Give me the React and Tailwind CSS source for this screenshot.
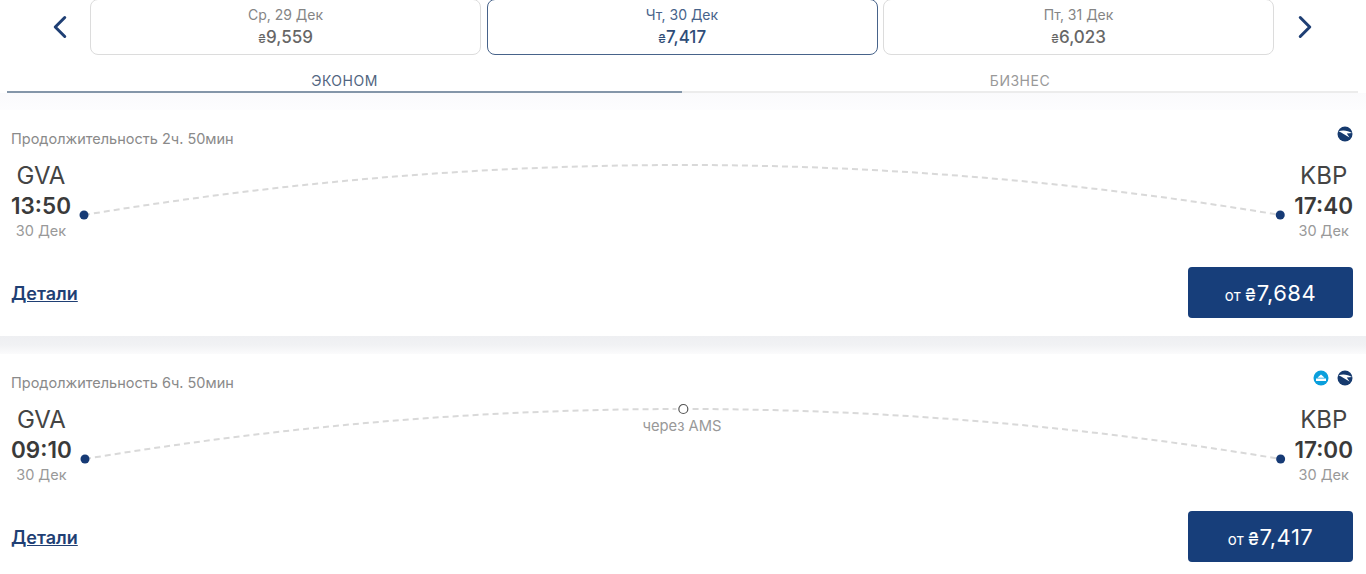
import { ChevronLeft, ChevronRight } from 'lucide-react'

const dates = [
  { day: 'Ср, 29 Дек', price: '9,559' },
  { day: 'Чт, 30 Дек', price: '7,417', active: true },
  { day: 'Пт, 31 Дек', price: '6,023' },
]

const flights = [
  { duration: 'Продолжительность 2ч. 50мин', dep: '13:50', arr: '17:40', price: '7,684', logos: ['wing'] },
  { duration: 'Продолжительность 6ч. 50мин', dep: '09:10', arr: '17:00', price: '7,417', logos: ['klm', 'wing'], via: 'через AMS' },
]

function WingLogo() {
  return (
    <svg width="16" height="16" viewBox="0 0 16 16">
      <circle cx="8" cy="8" r="7.5" fill="#163a6e" />
      <path d="M1.5 5.2C6 3.8 11 4.4 15 7L9.8 7.6L12.5 11.5L7 8.2C5 7 3.2 6 1.5 5.2Z" fill="#fff" />
    </svg>
  )
}

function KlmLogo() {
  return (
    <svg width="16" height="16" viewBox="0 0 16 16">
      <circle cx="8" cy="8" r="7.5" fill="#0a9fdc" />
      <path d="M3 8.5H13V11H3Z M4.5 7.8L6 6.2L8 4.6L10 6.2L11.5 7.8Z" fill="#fff" />
    </svg>
  )
}

function Curve({ via }) {
  const width = 1222
  const right = width - 14
  return (
    <svg className="flex-1 h-[70px] self-start overflow-visible" viewBox={`0 0 ${width} 70`} preserveAspectRatio="none">
      <path
        d={`M13 54Q${width / 2} -46 ${right} 54`}
        fill="none"
        stroke="#d9d9d9"
        strokeWidth="2"
        strokeDasharray="6 4"
      />
      {via && <circle cx={width / 2} cy="4" r="7" fill="#fff" />}
      {via && <circle cx={width / 2} cy="4" r="4.5" fill="#fff" stroke="#555" strokeWidth="1.2" />}
      <circle cx="13" cy="54" r="4.5" fill="#163a75" />
      <circle cx={right} cy="54" r="4.5" fill="#163a75" />
    </svg>
  )
}

function Airport({ code, time }) {
  return (
    <div className="flex flex-col items-center shrink-0">
      <div className="text-[24px] leading-[30px] text-[#444]">{code}</div>
      <div className="text-[22.5px] leading-[30px] font-semibold text-[#3a3a3a]">{time}</div>
      <div className="text-[14.5px] leading-[20px] text-[#999]">30 Дек</div>
    </div>
  )
}

function FlightCard({ flight }) {
  return (
    <div className="relative bg-white h-[226px] pl-[11px] pr-[13px] pt-[18px]">
      <div className="flex items-center justify-between h-[22px]">
        <div className="text-[14.5px] text-[#8a8a8a]">{flight.duration}</div>
        <div className="flex items-center gap-[8px] mb-[10px]">
          {flight.logos.map((logo) => (logo === 'klm' ? <KlmLogo key={logo} /> : <WingLogo key={logo} />))}
        </div>
      </div>
      <div className="relative flex mt-[11px]">
        <Airport code="GVA" time={flight.dep} />
        <Curve via={flight.via} />
        <Airport code="KBP" time={flight.arr} />
        {flight.via && (
          <div className="absolute left-0 right-0 top-[10px] text-center text-[14.75px] text-[#999]">{flight.via}</div>
        )}
      </div>
      <div className="flex items-center justify-between mt-[26px]">
        <a className="mt-[2px] text-[18px] font-semibold text-[#1f3f74] underline">Детали</a>
        <button className="flex items-baseline justify-center gap-[4px] w-[165px] h-[51px] pt-[10px] rounded bg-[#173e7a] text-white">
          <span className="text-[15px]">от</span>
          <span className="text-[22px] tracking-[0.5px]"><span className="text-[17px] font-medium">₴</span>{flight.price}</span>
        </button>
      </div>
    </div>
  )
}

export default function App() {
  return (
    <div className="h-[574px] overflow-hidden bg-white font-['Inter',sans-serif]">
      <div className="flex items-start">
        <div className="w-[90px] h-[53px] pl-[30px] flex items-center justify-center text-[#1f3f74]">
          <ChevronLeft size={38} strokeWidth={1.9} />
        </div>
        <div className="flex gap-[5.5px] w-[1184px] -mt-px">
          {dates.map((d) => (
            <div
              key={d.day}
              className={`flex-1 h-[56px] pt-[2px] rounded-[8px] border flex flex-col items-center justify-center ${d.active ? 'border-[#47638a] text-[#2f4d78]' : 'border-[#dcdcdc] text-[#666]'}`}
            >
              <div className={`text-[14px] leading-[20px] ${d.active ? 'text-[#47638a]' : 'text-[#858585]'}`}>{d.day}</div>
              <div className="text-[17px] leading-[24px] font-medium"><span className="text-[12px]">₴</span>{d.price}</div>
            </div>
          ))}
        </div>
        <div className="flex-1 h-[53px] pr-[31px] flex items-center justify-center text-[#1f3f74]">
          <ChevronRight size={38} strokeWidth={1.9} />
        </div>
      </div>
      <div className="flex ml-[7px] mr-[8px] mt-[15px] text-[14px] tracking-[0.5px]">
        <div className="w-[675px] h-[23px] text-center text-[#51657f] border-b-2 border-[#8496a9]">ЭКОНОМ</div>
        <div className="flex-1 h-[23px] text-center text-[#999] border-b-2 border-[#ececec]">БИЗНЕС</div>
      </div>
      <div className="h-[17px] bg-gradient-to-b from-[#fafafc] to-[#fdfdfe]" />
      <FlightCard flight={flights[0]} />
      <div className="h-[18px] bg-gradient-to-b from-[#eeeff2] via-[#f1f2f4] to-[#fbfbfc]" />
      <FlightCard flight={flights[1]} />
    </div>
  )
}
